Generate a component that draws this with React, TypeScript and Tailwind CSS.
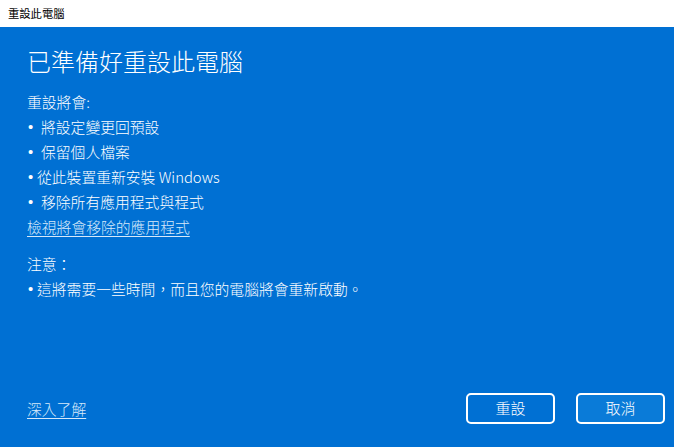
import React from "react";

const font = { fontFamily: '"Noto Sans CJK TC", "Noto Sans", sans-serif' };
const latin = { fontFamily: '"Liberation Sans", sans-serif' };

function Bullet({ text, tight }: { text: string; tight?: boolean }) {
  return (
    <div className="flex items-center h-[25px] pl-[1px]">
      <span className={tight ? "w-[9px] shrink-0" : "w-[13px] shrink-0"} style={latin}>
        •
      </span>
      <span>{text}</span>
    </div>
  );
}

export default function App() {
  return (
    <div className="w-[674px] h-[447px] flex flex-col overflow-hidden" style={font}>
      <div className="h-[27px] shrink-0 bg-white flex items-center px-[8px] text-[11.3px] text-black">
        重設此電腦
      </div>
      <div className="flex-1 bg-[#0070d3] text-white flex flex-col pl-[27px] pr-[9px] pb-[23px]">
        <h1 className="mt-[16px] h-[36px] leading-[36px] text-[24px] font-light">
          已準備好重設此電腦
        </h1>
        <div className="mt-[11px] text-[14.8px] font-light">
          <div className="h-[25px] flex items-center">重設將會:</div>
          <Bullet text="將設定變更回預設" />
          <Bullet text="保留個人檔案" />
          <Bullet text="從此裝置重新安裝 Windows" tight />
          <Bullet text="移除所有應用程式與程式" />
          <div className="h-[25px] flex items-center">
            <span className="underline underline-offset-[3px] text-[#d6e9fa]">檢視將會移除的應用程式</span>
          </div>
          <div className="h-[25px] mt-[12px] flex items-center">注意：</div>
          <Bullet text="這將需要一些時間，而且您的電腦將會重新啟動。" tight />
        </div>
        <div className="flex-1" />
        <div className="flex items-center justify-between">
          <span className="text-[14.8px] font-light underline underline-offset-[3px] text-[#d6e9fa] mt-[2px]">
            深入了解
          </span>
          <div className="flex gap-[21px]">
            <button className="w-[89px] h-[31px] rounded-[5px] border-2 border-white text-white text-[15px] font-light bg-[#0070d3]">
              重設
            </button>
            <button className="w-[89px] h-[31px] rounded-[5px] border-2 border-white text-white text-[15px] font-light bg-[#0a7bd8]">
              取消
            </button>
          </div>
        </div>
      </div>
    </div>
  );
}
